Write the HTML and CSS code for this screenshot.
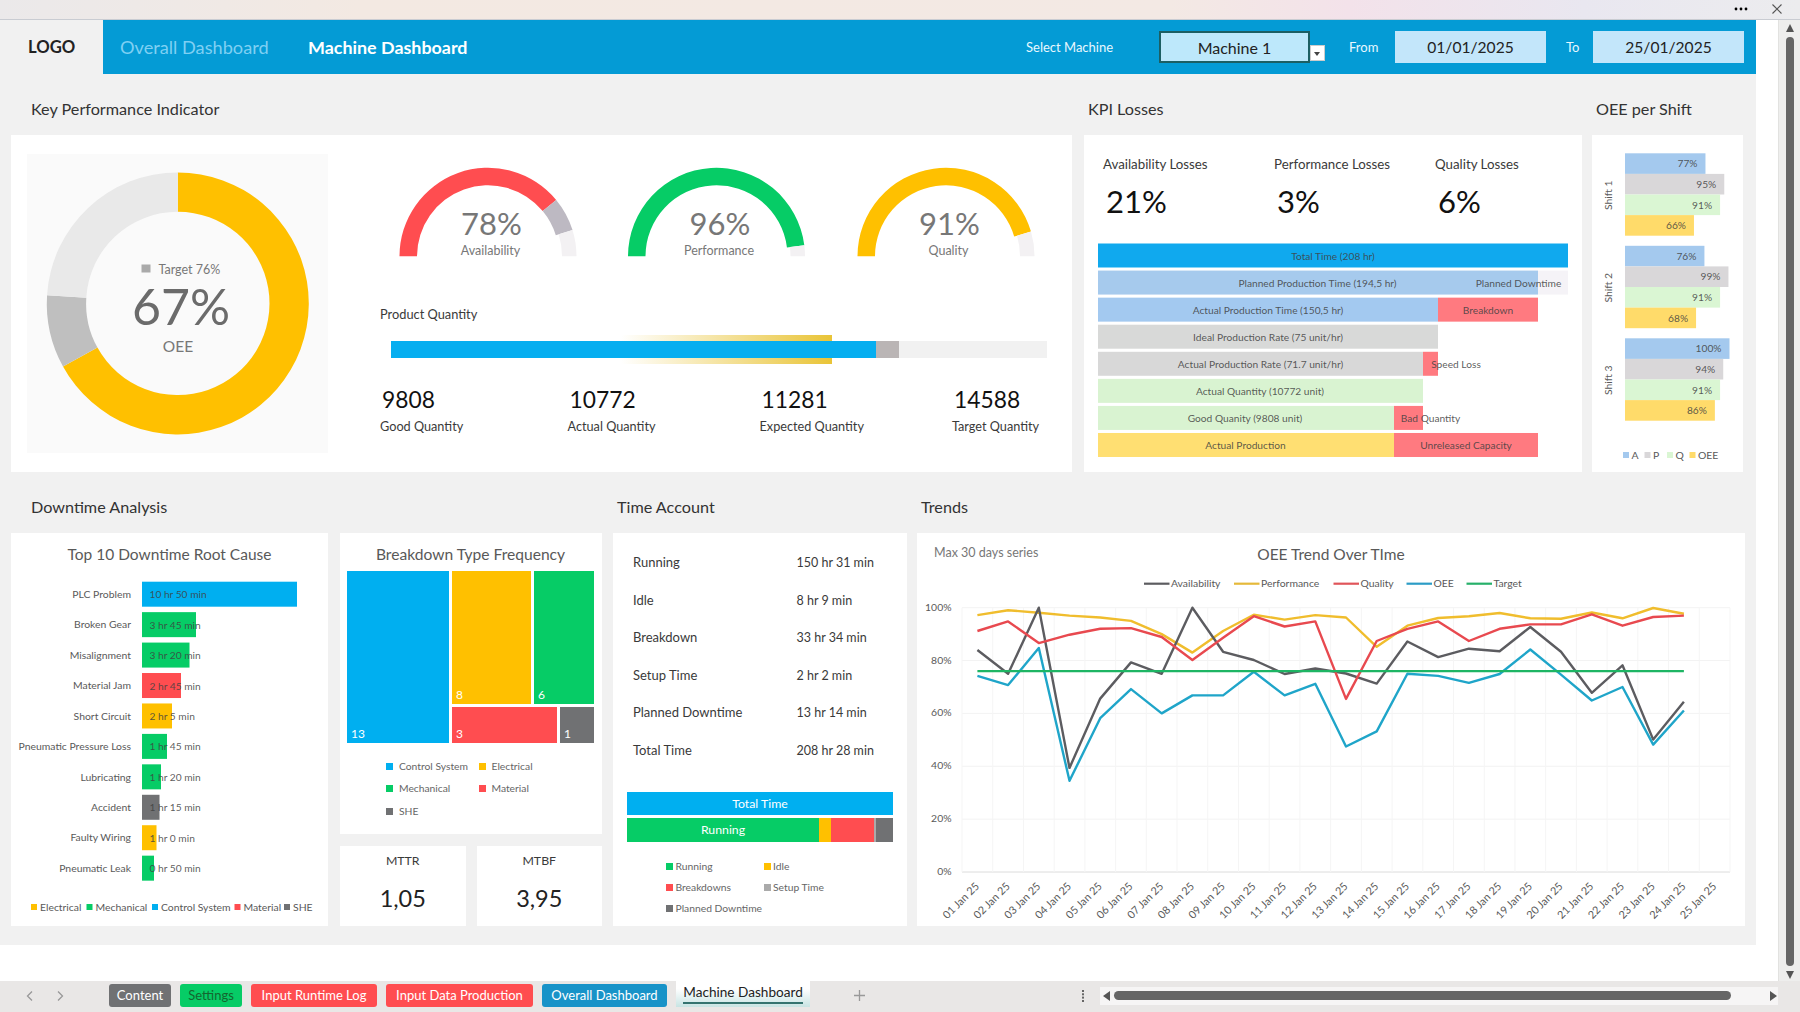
FILE: index.html
```html
<!DOCTYPE html>
<html lang="en">
<head>
    <meta charset="UTF-8">
    <meta name="viewport" content="width=device-width, initial-scale=1.0">
    <title>Machine Dashboard</title>
    <link rel="stylesheet" href="styles.css">
</head>
<body>

    <!-- Window bar -->
    <div class="window-bar">
        <svg width="14" height="4" viewBox="0 0 14 4"><circle cx="2" cy="2" r="1.4"/><circle cx="7" cy="2" r="1.4"/><circle cx="12" cy="2" r="1.4"/></svg>
        <svg width="10" height="10" viewBox="0 0 10 10"><path d="M.5 .5 9.5 9.5M9.5 .5 .5 9.5" stroke="#555" stroke-width="1.1"/></svg>
    </div>

    <div class="workspace">
        <div class="sheet">
            <!-- Header -->
            <div class="header">
                <div class="logo">LOGO</div>
                <a class="nav-link" href="#">Overall Dashboard</a>
                <a class="nav-link active" href="#">Machine Dashboard</a>
                <div class="filters">
                    <span class="filter-label machine-label">Select Machine</span>
                    <div class="field select">Machine 1<span class="arrow"></span></div>
                    <span class="filter-label from-label">From</span>
                    <div class="field">01/01/2025</div>
                    <span class="filter-label to-label">To</span>
                    <div class="field">25/01/2025</div>
                </div>
            </div>

            <!-- First row -->
            <div class="row row-top">
                <div class="section">
                    <h2>Key Performance Indicator</h2>
                    <div class="card kpi">
                        <div class="donut-box">
                            <svg id="donut" width="301" height="299" viewBox="27.5 154 301 299"></svg>
                        </div>
                        <div class="kpi-main">
                            <svg id="gauges" width="672" height="100" viewBox="380 160 672 100"></svg>
                            <h3>Product Quantity</h3>
                            <div class="qty-bar">
                                <div class="qty-range"></div>
                                <div class="qty-good"></div>
                                <div class="qty-actual"></div>
                                <div class="qty-rest"></div>
                            </div>
                            <div class="qty-values">
                                <div><b>9808</b><span>Good Quantity</span></div>
                                <div><b>10772</b><span>Actual Quantity</span></div>
                                <div><b>11281</b><span>Expected Quantity</span></div>
                                <div><b>14588</b><span>Target Quantity</span></div>
                            </div>
                        </div>
                    </div>
                </div>

                <div class="section">
                    <h2>KPI Losses</h2>
                    <div class="card losses">
                        <div class="loss-values">
                            <div><span>Availability Losses</span><b>21%</b></div>
                            <div><span>Performance Losses</span><b>3%</b></div>
                            <div><span>Quality Losses</span><b>6%</b></div>
                        </div>
                        <svg id="funnel" width="498" height="230" viewBox="1084 242 498 230"></svg>
                    </div>
                </div>

                <div class="section">
                    <h2>OEE per Shift</h2>
                    <div class="card">
                        <svg id="shifts" width="151" height="337" viewBox="1593 135 151 337"></svg>
                    </div>
                </div>
            </div>

            <!-- Second row -->
            <div class="row row-bottom">
                <div class="section">
                    <h2>Downtime Analysis</h2>
                    <div class="card">
                        <svg id="downtime" width="317" height="393" viewBox="11 533 317 393"></svg>
                    </div>
                </div>

                <div class="section breakdown">
                    <div class="card">
                        <h4>Breakdown Type Frequency</h4>
                        <div class="treemap">
                            <div class="tile control">13</div>
                            <div class="tile electrical">8</div>
                            <div class="tile mechanical">6</div>
                            <div class="tile material">3</div>
                            <div class="tile she">1</div>
                        </div>
                        <div class="legend type-legend">
                            <span><i class="control"></i>Control System</span>
                            <span><i class="electrical"></i>Electrical</span>
                            <span><i class="mechanical"></i>Mechanical</span>
                            <span><i class="material"></i>Material</span>
                            <span><i class="she"></i>SHE</span>
                        </div>
                    </div>
                    <div class="mt-cards">
                        <div class="card mt"><span>MTTR</span><b>1,05</b></div>
                        <div class="card mt"><span>MTBF</span><b>3,95</b></div>
                    </div>
                </div>

                <div class="section">
                    <h2>Time Account</h2>
                    <div class="card time">
                        <dl>
                            <dt>Running</dt><dd>150 hr 31 min</dd>
                            <dt>Idle</dt><dd>8 hr 9 min</dd>
                            <dt>Breakdown</dt><dd>33 hr 34 min</dd>
                            <dt>Setup Time</dt><dd>2 hr 2 min</dd>
                            <dt>Planned Downtime</dt><dd>13 hr 14 min</dd>
                            <dt>Total Time</dt><dd>208 hr 28 min</dd>
                        </dl>
                        <div class="time-bar"><div class="control">Total Time</div></div>
                        <div class="time-bar split">
                            <div class="mechanical">Running</div>
                            <div class="electrical"></div>
                            <div class="material"></div>
                            <div class="setup"></div>
                            <div class="she"></div>
                        </div>
                        <div class="legend time-legend">
                            <span><i class="mechanical"></i>Running</span>
                            <span><i class="electrical"></i>Idle</span>
                            <span><i class="material"></i>Breakdowns</span>
                            <span><i class="setup"></i>Setup Time</span>
                            <span><i class="she"></i>Planned Downtime</span>
                        </div>
                    </div>
                </div>

                <div class="section">
                    <h2>Trends</h2>
                    <div class="card">
                        <svg id="trend" width="827" height="393" viewBox="917 533 827 393"></svg>
                    </div>
                </div>
            </div>
        </div>

        <!-- Vertical scrollbar -->
        <div class="v-scroll">
            <svg width="10" height="8" viewBox="0 0 10 8"><path d="M5 0 9 8H1z"/></svg>
            <div class="v-thumb"></div>
            <svg width="10" height="8" viewBox="0 0 10 8"><path d="M1 0H9L5 8z"/></svg>
        </div>
    </div>

    <!-- Sheet tabs -->
    <div class="tab-bar">
        <svg class="tab-nav" width="42" height="12" viewBox="0 0 42 12"><path d="M8 1.500 3.500 6 8 10.500M34 1.500 38.500 6 34 10.500"/></svg>
        <div class="tabs">
            <div class="tab she w-content">Content</div>
            <div class="tab mechanical w-settings">Settings</div>
            <div class="tab material w-log">Input Runtime Log</div>
            <div class="tab material w-data">Input Data Production</div>
            <div class="tab overall w-overall">Overall Dashboard</div>
            <div class="tab current"><span>Machine Dashboard</span></div>
        </div>
        <svg class="tab-add" width="11" height="11" viewBox="0 0 11 11"><path d="M5.500 0V11M0 5.500H11"/></svg>
        <svg class="tab-dots" width="3" height="12" viewBox="0 0 3 12"><rect width="2" height="2"/><rect y="3.300" width="2" height="2"/><rect y="6.600" width="2" height="2"/><rect y="10" width="2" height="2"/></svg>
        <div class="h-scroll">
            <svg width="7" height="10" viewBox="0 0 7 10"><path d="M7 0V10L0 5z"/></svg>
            <div class="h-thumb"></div>
            <svg width="7" height="10" viewBox="0 0 7 10"><path d="M0 0V10L7 5z"/></svg>
        </div>
    </div>

    <script src="script.js"></script>
</body>
</html>
```
FILE: styles.css
```css
* {
    margin: 0;
    padding: 0;
    box-sizing: border-box;
}

body {
    width: 1800px;
    height: 1012px;
    overflow: hidden;
    font-family: Lato, 'Open Sans', sans-serif;
    background-color: #fff;
    color: #3a3a3a;
}

svg {
    display: block;
    flex-shrink: 0;
}

svg text {
    fill: #595959;
    font-size: 10.400px;
}

/* Window bar */
.window-bar {
    display: flex;
    align-items: center;
    justify-content: flex-end;
    gap: 24px;
    height: 20px;
    padding: 0 18px 2px 0;
    background: linear-gradient(to right, #ebe9ea, #f3e9e2 20%, #f3e9e4 65%, #f3e2ea 75%, #e9e7f0 88%, #ececee);
    border-bottom: 1px solid #c9ccd2;
}

/* Sheet */
.workspace {
    display: flex;
    height: 961px;
}

.sheet {
    width: 1756px;
    height: 925px;
    background-color: #f1f1f1;
}

.header {
    display: flex;
    align-items: center;
    height: 54px;
    background-color: #049bd5;
}

.logo {
    width: 103px;
    height: 54px;
    padding-left: 28px;
    line-height: 54px;
    font-size: 16.700px;
    font-weight: bold;
    color: #222;
    background-color: #f1f1f1;
}

.nav-link {
    margin-left: 17px;
    width: 171px;
    font-size: 18.200px;
    line-height: 54px;
    color: #7fd0f3;
    text-decoration: none;
    white-space: nowrap;
}

.nav-link.active {
    color: #fff;
    font-weight: bold;
    font-size: 17.900px;
}

.filters {
    display: flex;
    align-items: center;
    margin-left: auto;
    padding-right: 12px;
}

.filter-label {
    font-size: 13px;
    color: #e8f8ff;
}

.machine-label {
    width: 133px;
}

.from-label {
    width: 46px;
    margin-left: 39px;
}

.to-label {
    width: 27px;
    margin-left: 20px;
}

.field {
    position: relative;
    width: 151px;
    height: 32px;
    line-height: 33px;
    text-align: center;
    font-size: 15.600px;
    color: #222;
    background-color: #c3e6fa;
}

.field.select {
    background-color: #bde8fb;
    border: 2px solid #1c5f63;
    line-height: 29px;
    font-size: 16px;
}

/* Dropdown button hangs off the corner of the selected cell */
.field .arrow {
    position: absolute;
    left: 149px;
    top: 12px;
    width: 15px;
    height: 16px;
    background-color: #fff;
    border: 1px solid #ccc;
}

.field .arrow::after {
    content: '';
    position: absolute;
    left: 3px;
    top: 6px;
    border: 3.500px solid transparent;
    border-top: 4px solid #444;
}

/* Sections */
.row {
    display: grid;
    padding-left: 11px;
}

.row-top {
    grid-template-columns: 1061px 510px 151px;
    margin-top: 1px;
}

.row-top .section:nth-child(2) {
    padding: 0 0 0 12px;
    width: 510px;
}

.row-top .section:nth-child(3) {
    margin-left: 10px;
    width: 151px;
}

.row-bottom {
    grid-template-columns: 317px 263px 294px 827px;
    column-gap: 11px;
}

h2 {
    height: 60px;
    padding: 23px 0 0 4px;
    font-size: 16.200px;
    line-height: 22px;
    font-weight: normal;
    color: #333;
}

.section:first-child h2 {
    padding-left: 20px;
}

.card {
    background-color: #fff;
    height: 393px;
}

.row-top .card {
    height: 337px;
}

.row-bottom h2 {
    height: 61px;
    padding-top: 24px;
}

.row-bottom .section:last-child {
    margin-left: -1px;
}

h4 {
    font-size: 15.600px;
    font-weight: normal;
    color: #595959;
    text-align: center;
}

/* KPI card */
.kpi {
    display: flex;
    padding: 19px 0 0 16px;
    gap: 52px;
}

.donut-box {
    width: 301px;
    height: 299px;
    background-color: #fafafa;
}

.kpi-main {
    padding-top: 6px;
}

h3 {
    margin-top: 45px;
    font-size: 12.800px;
    line-height: 18px;
    font-weight: normal;
}

.qty-bar {
    position: relative;
    display: flex;
    width: 656px;
    height: 17px;
    margin: 18px 0 0 11px;
}

.qty-range {
    position: absolute;
    left: 230px;
    top: -6px;
    width: 211px;
    height: 29px;
    background: linear-gradient(to right, #fff, #e9c437);
}

.qty-good {
    position: relative;
    width: 485px;
    background-color: #06aef0;
}

.qty-actual {
    width: 23px;
    background-color: #bab5b5;
}

.qty-rest {
    flex: 1;
    background-color: #f1f1f1;
}

.qty-values {
    display: grid;
    grid-template-columns: 187.500px 192px 192.500px 100px;
    margin-top: 26px;
}

.qty-values b,
.qty-values span,
.loss-values b,
.loss-values span,
.mt b,
.mt span {
    display: block;
    font-weight: normal;
    white-space: nowrap;
}

.qty-values b {
    padding-left: 2px;
    font-size: 22.800px;
    line-height: 30px;
    color: #111;
}

.qty-values span {
    font-size: 12.700px;
    line-height: 25px;
}

/* Losses card */
.loss-values {
    display: grid;
    grid-template-columns: 171px 161px 100px;
    height: 107px;
    padding: 19px 0 0 19px;
}

.loss-values span {
    font-size: 13.300px;
    line-height: 20px;
}

.loss-values b {
    padding: 8px 0 0 3px;
    font-size: 31px;
    line-height: 38px;
    color: #111;
}

/* Series colours */
.control { background-color: #00aff0; }
.electrical { background-color: #ffc000; }
.mechanical { background-color: #06cc66; }
.material { background-color: #ff4d50; }
.she { background-color: #707173; }
.setup { background-color: #aaa; }

/* Breakdown column */
.breakdown {
    padding-top: 61px;
    padding-left: 1px;
}

.breakdown > .card {
    height: 301px;
    padding: 10px 8px 0 7px;
}

.breakdown h4 {
    line-height: 22px;
    white-space: nowrap;
}

.treemap {
    display: grid;
    grid-template-columns: 102px 79px 23px 34px;
    grid-template-rows: 133px 36px;
    gap: 3px;
    margin-top: 6px;
}

.tile {
    display: flex;
    align-items: flex-end;
    padding: 0 4px 2px;
    font-size: 12px;
    color: #fff;
}

.tile.control {
    grid-row: span 2;
}

.tile.mechanical,
.tile.material {
    grid-column: span 2;
}

.legend {
    display: grid;
    font-size: 10.300px;
    color: #666;
}

.legend i {
    display: inline-block;
    width: 7px;
    height: 7px;
}

.type-legend {
    grid-template-columns: 92.500px 100px;
    margin: 12px 0 0 39px;
    line-height: 22.300px;
}

.type-legend i {
    margin-right: 6px;
}

.mt-cards {
    display: flex;
    gap: 11px;
    margin-top: 12px;
}

.card.mt {
    flex: 1;
    height: 80px;
    text-align: center;
}

.mt span {
    padding-top: 6px;
    font-size: 12.300px;
    line-height: 18px;
}

.mt b {
    margin-top: 13px;
    font-size: 23.500px;
    line-height: 30px;
    color: #222;
}

/* Time account */
.time {
    padding: 11px 14px 0;
}

dl {
    display: grid;
    grid-template-columns: 163.500px auto;
    margin-left: 6px;
    font-size: 13px;
    line-height: 37.500px;
}

dd {
    font-size: 12.500px;
}

.time-bar {
    display: flex;
    height: 23px;
    margin-top: 23px;
    line-height: 23px;
    text-align: center;
    font-size: 12.300px;
    color: #fff;
}

.time-bar div {
    flex: 1;
}

.time-bar.split {
    display: grid;
    grid-template-columns: 192px 11.500px 43.500px 2px auto;
    height: 24px;
    margin-top: 3px;
}

.time-legend {
    grid-template-columns: 97.500px 100px;
    margin: 14px 0 0 39px;
    line-height: 21.200px;
    white-space: nowrap;
}

.time-legend i {
    margin-right: 2.500px;
}

/* Scrollbars and sheet tabs */
.v-scroll {
    display: flex;
    flex-direction: column;
    align-items: center;
    gap: 5px;
    width: 22px;
    margin-left: auto;
    padding: 4px 0 2px;
    background-color: #eeeeed;
    border-left: 1px solid #e2e2e0;
}

.v-thumb {
    flex: 1;
    width: 8px;
    border-radius: 4px;
    background-color: #666;
}

.v-scroll path,
.h-scroll path {
    fill: #555;
}

.tab-bar {
    display: flex;
    align-items: center;
    height: 31px;
    padding: 0 22px 2px 24px;
    background-color: #e9e7e6;
}

.tab-nav path,
.tab-add path {
    fill: none;
    stroke: #999;
    stroke-width: 1.300;
}

.tabs {
    display: flex;
    gap: 9px;
    height: 29px;
    margin-left: 43px;
    padding-top: 3px;
}

.tab {
    height: 23px;
    border-radius: 3px;
    text-align: center;
    line-height: 23px;
    font-size: 13px;
    white-space: nowrap;
    color: #fff;
}

.w-content { width: 62px; }
.w-settings { width: 62px; color: #14662f; }
.w-log { width: 126px; }
.w-data { width: 147px; }
.w-overall { width: 125px; }

.tab.overall {
    background-color: #1893c8;
}

.tab.current {
    width: 134px;
    height: 26px;
    margin-top: -3px;
    color: #222;
    background: linear-gradient(#fff 30%, #c7e4e3);
    border-radius: 0;
    font-size: 13.600px;
}

.tab.current span {
    display: inline-block;
    height: 22px;
    line-height: 20px;
    border-bottom: 2px solid #34736f;
}

.tab-add {
    margin-left: 44px;
}

.tab-dots {
    margin-left: 217px;
    fill: #666;
}

.h-scroll {
    display: flex;
    align-items: center;
    gap: 4px;
    flex: 1;
    height: 18px;
    margin-left: 15px;
    padding: 0 1px 0 3px;
    background-color: #f6f5f5;
}

.h-thumb {
    width: 617px;
    height: 9px;
    margin-right: auto;
    border-radius: 5px;
    background-color: #666;
}

/* Chart text */
svg .title { font-size: 15.500px; }
svg .muted { fill: #777; }
svg .note { font-size: 12.500px; fill: #777; }
svg .bar-label { font-size: 10.200px; fill: #404040; fill-opacity: .85; }
```
FILE: script.js
```js
const NS = 'http://www.w3.org/2000/svg';

const colors = {
    blue: '#00aff0', yellow: '#ffc000', green: '#06cc66', red: '#ff4d50', gray: '#707173'
};

function add(svg, tag, attrs, text) {
    const el = document.createElementNS(NS, tag);
    for (const key in attrs) el.setAttribute(key, attrs[key]);
    if (text !== undefined) el.textContent = text;
    svg.appendChild(el);
}

function rect(svg, x, y, width, height, fill) {
    add(svg, 'rect', { x, y, width, height, fill });
}

// anchor: start, middle or end
function label(svg, x, y, text, anchor, cls, extra) {
    add(svg, 'text', Object.assign({ x, y, 'text-anchor': anchor || 'start', class: cls || '' }, extra), text);
}

// Ring slice, angles in degrees clockwise from the top
function slice(svg, cx, cy, r1, r2, from, to, fill) {
    const p = (r, a) => {
        const t = a * Math.PI / 180;
        return (cx + r * Math.sin(t)).toFixed(2) + ' ' + (cy - r * Math.cos(t)).toFixed(2);
    };
    const big = to - from > 180 ? 1 : 0;
    add(svg, 'path', {
        d: `M${p(r1, from)}A${r1} ${r1} 0 ${big} 1 ${p(r1, to)}L${p(r2, to)}A${r2} ${r2} 0 ${big} 0 ${p(r2, from)}Z`,
        fill
    });
}

// OEE donut
function drawDonut() {
    const svg = document.getElementById('donut');
    slice(svg, 178.3, 303.4, 131, 91.7, 0, 241.2, colors.yellow);
    slice(svg, 178.3, 303.4, 131, 91.7, 241.2, 273.6, '#bfbfbf');
    slice(svg, 178.3, 303.4, 131, 91.7, 273.6, 360, '#e9e9e9');
    rect(svg, 142, 264.5, 9, 8, '#aaa');
    label(svg, 159, 273.5, 'Target 76%', 'start', 'note');
    label(svg, 181.5, 324.5, '67%', 'middle', '', { style: 'font-size:50px;fill:#6b6b6b' });
    label(svg, 178.5, 352, 'OEE', 'middle', 'muted', { style: 'font-size:15.5px' });
}

// Half-circle gauges
function drawGauges() {
    const svg = document.getElementById('gauges');
    const gauges = [
        ['Availability', 78, 488, colors.red, 90.4],
        ['Performance', 96, 716.5, colors.green, 96],
        ['Quality', 91, 946, colors.yellow, 91]
    ];
    gauges.forEach(([name, value, cx, color, target]) => {
        const angle = v => -90 + v * 1.8;
        slice(svg, cx, 256.3, 88.5, 71, angle(0), angle(value), color);
        if (target > value) slice(svg, cx, 256.3, 88.5, 71, angle(value), angle(target), '#bdb9c2');
        slice(svg, cx, 256.3, 88.5, 74, angle(target), 90, '#f3f1f3');
        label(svg, cx + 3.5, 234.5, value + '%', 'middle', '', { style: 'font-size:31px;fill:#777' });
        label(svg, cx + 2.5, 255, name, 'middle', 'note');
    });
}

// Losses waterfall: [colour, end, label, label centre], then the loss part
function drawFunnel() {
    const svg = document.getElementById('funnel');
    const left = 1098;
    const red = '#ff7a80';
    const rows = [
        ['#10a9ee', 1568, 'Total Time (208 hr)', 1333],
        ['#a6caed', 1538, 'Planned Production Time (194,5 hr)', 1317.5, '#f5f3f7', 1568, 'Planned Downtime', 1518.5],
        ['#a3c9f0', 1438, 'Actual Production Time (150,5 hr)', 1268, red, 1538, 'Breakdown', 1488],
        ['#d8d9d8', 1438, 'Ideal Production Rate (75 unit/hr)', 1268],
        ['#d8d8d8', 1423, 'Actual Production Rate (71.7 unit/hr)', 1260.5, red, 1438, 'Speed Loss', 1456],
        ['#d9f3d1', 1423, 'Actual Quantity (10772 unit)', 1260],
        ['#d9f3d1', 1394, 'Good Quanity (9808 unit)', 1245, red, 1423, 'Bad Quantity', 1430.5],
        ['#ffdf72', 1394, 'Actual Production', 1245.5, red, 1538, 'Unreleased Capacity', 1466]
    ];
    rows.forEach(([fill, end, text, cx, lossFill, lossEnd, lossText, lossX], i) => {
        const y = 243.5 + i * 27.07;
        rect(svg, left, y, end - left, 24, fill);
        if (lossText) rect(svg, end, y, lossEnd - end, 24, lossFill);
        label(svg, cx, y + 16.2, text, 'middle', 'bar-label');
        if (lossText) label(svg, lossX, y + 16.2, lossText, 'middle', 'bar-label');
    });
}

// OEE per shift
function drawShifts() {
    const svg = document.getElementById('shifts');
    const fills = ['#a4c9ee', '#d9d7d9', '#daf6d3', '#ffdb6a'];
    const shifts = [[77, 95, 91, 66], [76, 99, 91, 68], [100, 94, 91, 86]];
    shifts.forEach((values, s) => {
        const top = 153.3 + s * 92.5;
        values.forEach((v, i) => {
            const w = v * 1.045;
            rect(svg, 1626, top + i * 20.6, w, 20.6, fills[i]);
            label(svg, 1626 + w - 8, top + i * 20.6 + 14, v + '%', 'end', 'bar-label');
        });
        label(svg, 0, 0, 'Shift ' + (s + 1), 'middle', '', { transform: `translate(1612.5 ${top + 42}) rotate(-90)` });
    });
    [['A', 1624], ['P', 1645.5], ['Q', 1668], ['OEE', 1690.5]].forEach(([text, x], i) => {
        rect(svg, x, 452, 6, 6, fills[i]);
        label(svg, x + 8.5, 458.5, text);
    });
}

// Top 10 downtime
function drawDowntime() {
    const svg = document.getElementById('downtime');
    const items = [
        ['PLC Problem', 155, '10 hr 50 min', colors.blue],
        ['Broken Gear', 54, '3 hr 45 min', colors.green],
        ['Misalignment', 47.5, '3 hr 20 min', colors.green],
        ['Material Jam', 39, '2 hr 45 min', colors.red],
        ['Short Circuit', 30, '2 hr 5 min', colors.yellow],
        ['Pneumatic Pressure Loss', 25, '1 hr 45 min', colors.green],
        ['Lubricating', 19, '1 hr 20 min', colors.green],
        ['Accident', 17.5, '1 hr 15 min', colors.gray],
        ['Faulty Wiring', 14.5, '1 hr 0 min', colors.yellow],
        ['Pneumatic Leak', 12, '0 hr 50 min', colors.green]
    ];
    label(svg, 169.5, 560, 'Top 10 Downtime Root Cause', 'middle', 'title');
    items.forEach(([name, width, time, fill], i) => {
        const y = 581.7 + i * 30.44;
        rect(svg, 142, y, width, 25, fill);
        label(svg, 131, y + 16.2, name, 'end');
        label(svg, 149.5, y + 16.5, time, 'start', 'bar-label');
    });
    [['Electrical', 31, colors.yellow], ['Mechanical', 86.5, colors.green], ['Control System', 152, colors.blue],
     ['Material', 234.5, colors.red], ['SHE', 284, colors.gray]].forEach(([text, x, fill]) => {
        rect(svg, x, 904, 6, 6, fill);
        label(svg, x + 9, 911, text);
    });
}

// OEE trend
function drawTrend() {
    const svg = document.getElementById('trend');
    const left = 962, right = 1730, bottom = 872, height = 264.3;
    const step = (right - left) / 25;
    const series = [
        ['#f0bd2d', [97.2, 99, 98.1, 97, 96.3, 95, 90, 83, 91.2, 97.3, 95.5, 97.2, 96.3, 85.2, 93.2, 96.1, 96.8, 98, 96, 95.8, 98.2, 96, 99.9, 97.7]],
        ['#5c5c60', [84, 75, 100, 39.4, 65.6, 79.3, 75, 100, 83.3, 80.2, 74.9, 77, 75.1, 71.3, 87.2, 81.3, 84.5, 83.5, 92.7, 83.3, 67.8, 78.2, 50.1, 64.4]],
        ['#e8494f', [91.2, 94.8, 86.6, 89.8, 92, 92.3, 88.9, 80.2, 88.6, 96.8, 92.9, 94.8, 65.5, 87.4, 92, 94.8, 87.4, 92, 93.7, 93.7, 97.5, 93.2, 96.5, 97]],
        ['#1fa5c9', [74.2, 70.7, 84.8, 34.5, 58.2, 69.2, 60, 66.8, 66.8, 75.8, 66.8, 71.2, 47.5, 53.2, 75, 74.2, 71.6, 74.9, 84.2, 74.7, 64.9, 70, 48.2, 61.1]],
        ['#1eb564', Array(24).fill(76)]
    ];

    label(svg, 934, 556.5, 'Max 30 days series', 'start', 'note');
    label(svg, 1331, 560, 'OEE Trend Over TIme', 'middle', 'title');
    [['Availability', 1144, '#5c5c60'], ['Performance', 1234, '#e5b93a'], ['Quality', 1333.5, '#e0555a'],
     ['OEE', 1406.5, '#2c9cc6'], ['Target', 1466.5, '#27b06a']].forEach(([text, x, stroke]) => {
        add(svg, 'path', { d: `M${x} 583.7h25.5`, stroke, 'stroke-width': 2.2 });
        label(svg, x + 27, 587, text);
    });

    for (let p = 0; p <= 100; p += 20) {
        const y = bottom - p * height / 100;
        add(svg, 'path', { d: `M${left} ${y}H${right}`, stroke: p ? '#f3f3f3' : '#dcdcdc' });
        label(svg, 951.5, y + 3, p + '%', 'end');
    }
    for (let i = 0; i <= 25; i++) {
        add(svg, 'path', { d: `M${left + i * step} ${bottom - height}V${bottom}`, stroke: '#f5f5f5' });
        if (i < 25) {
            const x = left + (i + .5) * step;
            const day = String(i + 1).padStart(2, '0');
            label(svg, 0, 0, day + ' Jan 25', 'end', '', { transform: `translate(${x + 2.5} 887) rotate(-45)`, style: 'font-size:10.8px' });
        }
    }
    series.forEach(([stroke, values]) => {
        const points = values.map((v, i) => `${(left + (i + .5) * step).toFixed(1)},${(bottom - v * height / 100).toFixed(1)}`);
        add(svg, 'polyline', { points: points.join(' '), fill: 'none', stroke, 'stroke-width': 2.4, 'stroke-linejoin': 'round' });
    });
}

drawDonut();
drawGauges();
drawFunnel();
drawShifts();
drawDowntime();
drawTrend();
```
